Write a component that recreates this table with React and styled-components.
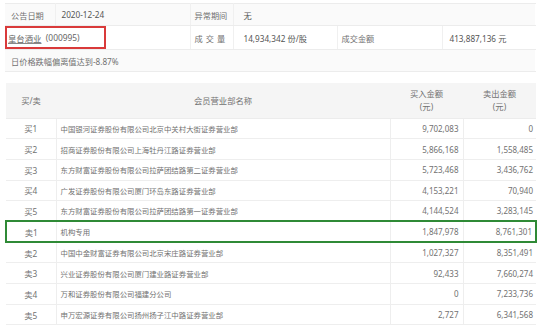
import React from 'react';
import styled, { createGlobalStyle } from 'styled-components';

const GlobalStyle = createGlobalStyle`
  html, body {
    margin: 0;
    padding: 0;
    background: #fff;
  }
  body {
    font-family: "Noto Sans", "Noto Sans CJK SC", sans-serif;
    color: #666;
  }
`;

const Page = styled.div`
  width: 554px;
  height: 334px;
  padding: 3px 0 0 5px;
  box-sizing: border-box;
  overflow: hidden;
`;

const InfoTable = styled.table`
  width: 530px;
  border-collapse: collapse;
  table-layout: fixed;
  font-size: 8.2px;
`;

const InfoRow = styled.tr`
  background: ${p => (p.$shade ? '#fafafa' : '#fff')};
  height: ${p => p.$h || 22}px;
`;

const InfoCell = styled.td`
  border-top: 1px solid #ececec;
  border-bottom: 1px solid #ececec;
  border-right: 1px solid ${p => (p.$last ? 'transparent' : '#f0f0f0')};
  padding: 0 0 0 ${p => p.$pad ?? 6}px;
  white-space: nowrap;
  overflow: hidden;
  letter-spacing: ${p => p.$spread ? '3px' : '0'};
  color: ${p => (p.$dark ? '#555' : '#717171')};
`;

const StockCell = styled.td`
  padding: 0;
  border-top: 1px solid #ececec;
  border-bottom: 1px solid #ececec;
  border-right: 1px solid #f0f0f0;
  height: 23px;
`;

const RedBox = styled.div`
  width: 101px;
  height: 23px;
  box-sizing: border-box;
  border: 2px solid #d93a3a;
  padding-left: 1px;
  display: flex;
  align-items: center;
  color: #666;
  font-size: 8.4px;
  white-space: pre;
`;

const StockLink = styled.span`
  text-decoration: underline;
  text-decoration-color: #888;
`;

const Gap = styled.div`
  height: 11px;
`;

const TradeTable = styled.table`
  width: 530px;
  border-collapse: collapse;
  table-layout: fixed;
`;

const HeadRow = styled.tr`
  background: #f5f5f5;
  height: 35px;
`;

const HeadCell = styled.th`
  font-weight: normal;
  font-size: 8.3px;
  line-height: 13px;
  color: #717171;
  text-align: center;
  padding: 0;
  border-bottom: 1px solid #ececec;
`;

const Row = styled.tr`
  height: 20.7px;
`;

const Cell = styled.td`
  border-bottom: 1px solid ${p => (p.$hl ? '#2f8a36' : '#eeeeee')};
  border-top: ${p => (p.$hl ? '2px solid #2f8a36' : '1px solid #eeeeee')};
  border-left: ${p => (p.$hl && p.$first ? '2px solid #2f8a36' : 'none')};
  border-right: ${p => (p.$hl && p.$end ? '2px solid #2f8a36' : p.$end ? 'none' : '1px solid #eeeeee')};
  ${p => p.$hl && 'border-bottom-width: 2px;'}
  padding: 0 ${p => p.$pr ?? 4}px 0 ${p => p.$pl ?? 4}px;
  font-size: ${p => p.$size || 8}px;
  text-align: ${p => p.$align || 'left'};
  color: #717171;
  white-space: nowrap;
  overflow: hidden;
`;

const trades = [
  ['买1', '中国银河证券股份有限公司北京中关村大街证券营业部', '9,702,083', '0'],
  ['买2', '招商证券股份有限公司上海牡丹江路证券营业部', '5,866,168', '1,558,485'],
  ['买3', '东方财富证券股份有限公司拉萨团结路第二证券营业部', '5,723,468', '3,436,762'],
  ['买4', '广发证券股份有限公司厦门环岛东路证券营业部', '4,153,221', '70,940'],
  ['买5', '东方财富证券股份有限公司拉萨团结路第一证券营业部', '4,144,524', '3,283,145'],
  ['卖1', '机构专用', '1,847,978', '8,761,301', true],
  ['卖2', '中国中金财富证券有限公司北京宋庄路证券营业部', '1,027,327', '8,351,491'],
  ['卖3', '兴业证券股份有限公司厦门建业路证券营业部', '92,433', '7,660,274'],
  ['卖4', '万和证券股份有限公司福建分公司', '0', '7,233,736'],
  ['卖5', '申万宏源证券有限公司扬州扬子江中路证券营业部', '2,727', '6,341,568'],
];

export default function App() {
  return (
    <Page>
      <GlobalStyle />
      <InfoTable>
        <colgroup>
          <col style={{ width: 50 }} />
          <col style={{ width: 135 }} />
          <col style={{ width: 43 }} />
          <col style={{ width: 104 }} />
          <col style={{ width: 105 }} />
          <col style={{ width: 93 }} />
        </colgroup>
        <tbody>
          <InfoRow $shade>
            <InfoCell>公告日期</InfoCell>
            <InfoCell $dark>2020-12-24</InfoCell>
            <InfoCell $pad={4}>异常期间</InfoCell>
            <InfoCell $last colSpan={3} $pad={10} $dark>无</InfoCell>
          </InfoRow>
          <InfoRow $h={23}>
            <StockCell colSpan={2}>
              <RedBox>
                <StockLink>皇台酒业</StockLink>{'  (000995)'}
              </RedBox>
            </StockCell>
            <InfoCell $pad={4} $spread>成交量</InfoCell>
            <InfoCell $pad={10} $dark>14,934,342 份/股</InfoCell>
            <InfoCell $pad={4}>成交金额</InfoCell>
            <InfoCell $last $pad={7} $dark>413,887,136 元</InfoCell>
          </InfoRow>
          <InfoRow $shade>
            <InfoCell $last colSpan={6}>日价格跌幅偏离值达到-8.87%</InfoCell>
          </InfoRow>
        </tbody>
      </InfoTable>
      <Gap />
      <TradeTable>
        <colgroup>
          <col style={{ width: 50 }} />
          <col style={{ width: 334 }} />
          <col style={{ width: 73 }} />
          <col style={{ width: 73 }} />
        </colgroup>
        <thead>
          <HeadRow>
            <HeadCell>买/卖</HeadCell>
            <HeadCell>会员营业部名称</HeadCell>
            <HeadCell>买入金额<br />(元)</HeadCell>
            <HeadCell>卖出金额<br />(元)</HeadCell>
          </HeadRow>
        </thead>
        <tbody>
          {trades.map(([side, name, buy, sell, hl]) => (
            <Row key={side}>
              <Cell $hl={hl} $first $align="center" $size={8.3}>{side}</Cell>
              <Cell $hl={hl} $size={7.4}>{name}</Cell>
              <Cell $hl={hl} $align="right">{buy}</Cell>
              <Cell $hl={hl} $end $align="right" $pr={3}>{sell}</Cell>
            </Row>
          ))}
        </tbody>
      </TradeTable>
    </Page>
  );
}
